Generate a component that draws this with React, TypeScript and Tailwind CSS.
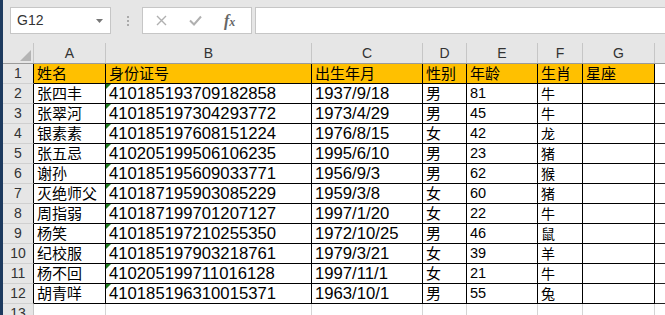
import React from "react";

type Person = {
    name: string;
    id: string;
    birth: string;
    sex: string;
    age: string;
    zodiac: string;
};

const people: Person[] = [
    { name: "张四丰", id: "410185193709182858", birth: "1937/9/18", sex: "男", age: "81", zodiac: "牛" },
    { name: "张翠河", id: "410185197304293772", birth: "1973/4/29", sex: "男", age: "45", zodiac: "牛" },
    { name: "银素素", id: "410185197608151224", birth: "1976/8/15", sex: "女", age: "42", zodiac: "龙" },
    { name: "张五忌", id: "410205199506106235", birth: "1995/6/10", sex: "男", age: "23", zodiac: "猪" },
    { name: "谢孙", id: "410185195609033771", birth: "1956/9/3", sex: "男", age: "62", zodiac: "猴" },
    { name: "灭绝师父", id: "410187195903085229", birth: "1959/3/8", sex: "女", age: "60", zodiac: "猪" },
    { name: "周指弱", id: "410187199701207127", birth: "1997/1/20", sex: "女", age: "22", zodiac: "牛" },
    { name: "杨笑", id: "410185197210255350", birth: "1972/10/25", sex: "男", age: "46", zodiac: "鼠" },
    { name: "纪校服", id: "410185197903218761", birth: "1979/3/21", sex: "女", age: "39", zodiac: "羊" },
    { name: "杨不回", id: "410205199711016128", birth: "1997/11/1", sex: "女", age: "21", zodiac: "牛" },
    { name: "胡青咩", id: "410185196310015371", birth: "1963/10/1", sex: "男", age: "55", zodiac: "兔" },
];

const colWidths = ["w-[72px]", "w-[206px]", "w-[111px]", "w-[44px]", "w-[71px]", "w-[45px]", "w-[72px]"];
const letters = ["A", "B", "C", "D", "E", "F", "G"];
const headers = ["姓名", "身份证号", "出生年月", "性别", "年龄", "生肖", "星座"];

const cjk = "font-['Noto_Sans_CJK_SC',sans-serif]";
const latin = "font-['Liberation_Sans','Noto_Sans_CJK_SC',sans-serif]";

function RowHead({ n, last }: { n: number; last?: boolean }) {
    return (
        <div
            className={`w-[31px] shrink-0 h-full bg-[#e6e6e6] border-b border-b-[#d0d0d0] border-r flex items-center justify-center text-[14px] text-[#333] ${latin} ${
                last ? "border-r-[#c6c6c6]" : "border-r-black"
            }`}
        >
            {n}
        </div>
    );
}

export default function App() {
    return (
        <div className="w-[665px] h-[315px] overflow-hidden bg-[#e6e6e6] flex">
            <div className="w-[3px] shrink-0 bg-[#1d3a5e]" />
            <div className="flex-1 min-w-0 flex flex-col">
                {/* toolbar */}
                <div className="h-[43px] shrink-0 flex items-start pt-[7px] pl-[7px]">
                    <div className="w-[101px] h-[27px] bg-white border border-[#c6c6c6] flex items-center justify-between pl-[6px] pr-[7px]">
                        <span className={`text-[14px] text-[#333] ${latin}`}>G12</span>
                        <svg width="7" height="4" viewBox="0 0 7 4">
                            <path d="M0 0h7L3.5 4z" fill="#777" />
                        </svg>
                    </div>
                    <div className="w-[31px] h-[27px] flex flex-col items-center justify-center gap-[2px] pl-[2px]">
                        <div className="w-[2px] h-[2px] bg-[#aaa]" />
                        <div className="w-[2px] h-[2px] bg-[#aaa]" />
                        <div className="w-[2px] h-[2px] bg-[#aaa]" />
                    </div>
                    <div className="w-[110px] h-[27px] bg-white border border-[#c6c6c6] flex items-center pl-[13px] gap-[22px]">
                        <svg width="11" height="11" viewBox="0 0 11 11">
                            <path d="M1 1l9 9M10 1l-9 9" stroke="#b0b0b0" strokeWidth="1.4" />
                        </svg>
                        <svg width="13" height="11" viewBox="0 0 13 11">
                            <path d="M1 5.5l4 4L12 1.5" stroke="#b0b0b0" strokeWidth="2" fill="none" />
                        </svg>
                        <span className="italic font-bold font-['Liberation_Serif',serif] text-[16px] text-[#666] leading-none">
                            f<span className="text-[12px]">x</span>
                        </span>
                    </div>
                    <div className="flex-1 ml-[3px] h-[27px] bg-white border border-r-0 border-[#c6c6c6]" />
                </div>

                {/* column headers */}
                <div className="h-[21px] shrink-0 flex border-b border-b-[#9b9b9b]">
                    <div className="w-[31px] shrink-0 h-full border-r border-r-[#c6c6c6] flex items-end justify-end pr-[2px] pb-[2px]">
                        <svg width="11" height="11" viewBox="0 0 11 11">
                            <path d="M11 0v11H0z" fill="#b4b4b4" />
                        </svg>
                    </div>
                    {letters.map((l, i) => (
                        <div
                            key={l}
                            className={`${colWidths[i]} shrink-0 h-full border-r border-r-[#c6c6c6] flex items-center justify-center text-[14px] text-[#333] ${latin}`}
                        >
                            {l}
                        </div>
                    ))}
                    <div className="flex-1" />
                </div>

                {/* row 1 */}
                <div className="h-[20px] shrink-0 flex">
                    <RowHead n={1} />
                    {headers.map((h, i) => (
                        <div
                            key={h}
                            className={`${colWidths[i]} shrink-0 h-full bg-[#ffc000] border-r border-b border-black flex items-center pl-[3px] text-[15px] text-black ${cjk}`}
                        >
                            {h}
                        </div>
                    ))}
                    <div className="flex-1 bg-white border-b border-b-[#222]" />
                </div>

                {people.map((p, r) => {
                    const cells = [p.name, p.id, p.birth, p.sex, p.age, p.zodiac, ""];
                    const styles = [
                        `text-[15px] ${cjk}`,
                        `text-[16.7px] ${latin}`,
                        `text-[16.7px] ${latin}`,
                        `text-[15px] ${cjk}`,
                        `text-[14.5px] ${latin}`,
                        `text-[14px] ${cjk}`,
                        "",
                    ];
                    return (
                        <div key={p.id} className="h-[20px] shrink-0 flex">
                            <RowHead n={r + 2} />
                            {cells.map((c, i) => (
                                <div
                                    key={i}
                                    className={`${colWidths[i]} relative shrink-0 h-full bg-white border-r border-b border-black flex items-center pl-[3px] text-black whitespace-nowrap ${styles[i]}`}
                                >
                                    {i === 1 && (
                                        <div className="absolute top-0 left-0 w-0 h-0 border-t-[5px] border-r-[5px] border-t-[#1d7a1d] border-r-transparent" />
                                    )}
                                    {c}
                                </div>
                            ))}
                            <div className="flex-1 bg-white border-b border-b-[#222]" />
                        </div>
                    );
                })}

                {/* row 13 */}
                <div className="h-[20px] shrink-0 flex">
                    <RowHead n={13} last />
                    {colWidths.map((w, i) => (
                        <div key={i} className={`${w} shrink-0 h-full bg-white border-r border-r-[#d4d4d4]`} />
                    ))}
                    <div className="flex-1 bg-white" />
                </div>
            </div>
        </div>
    );
}
